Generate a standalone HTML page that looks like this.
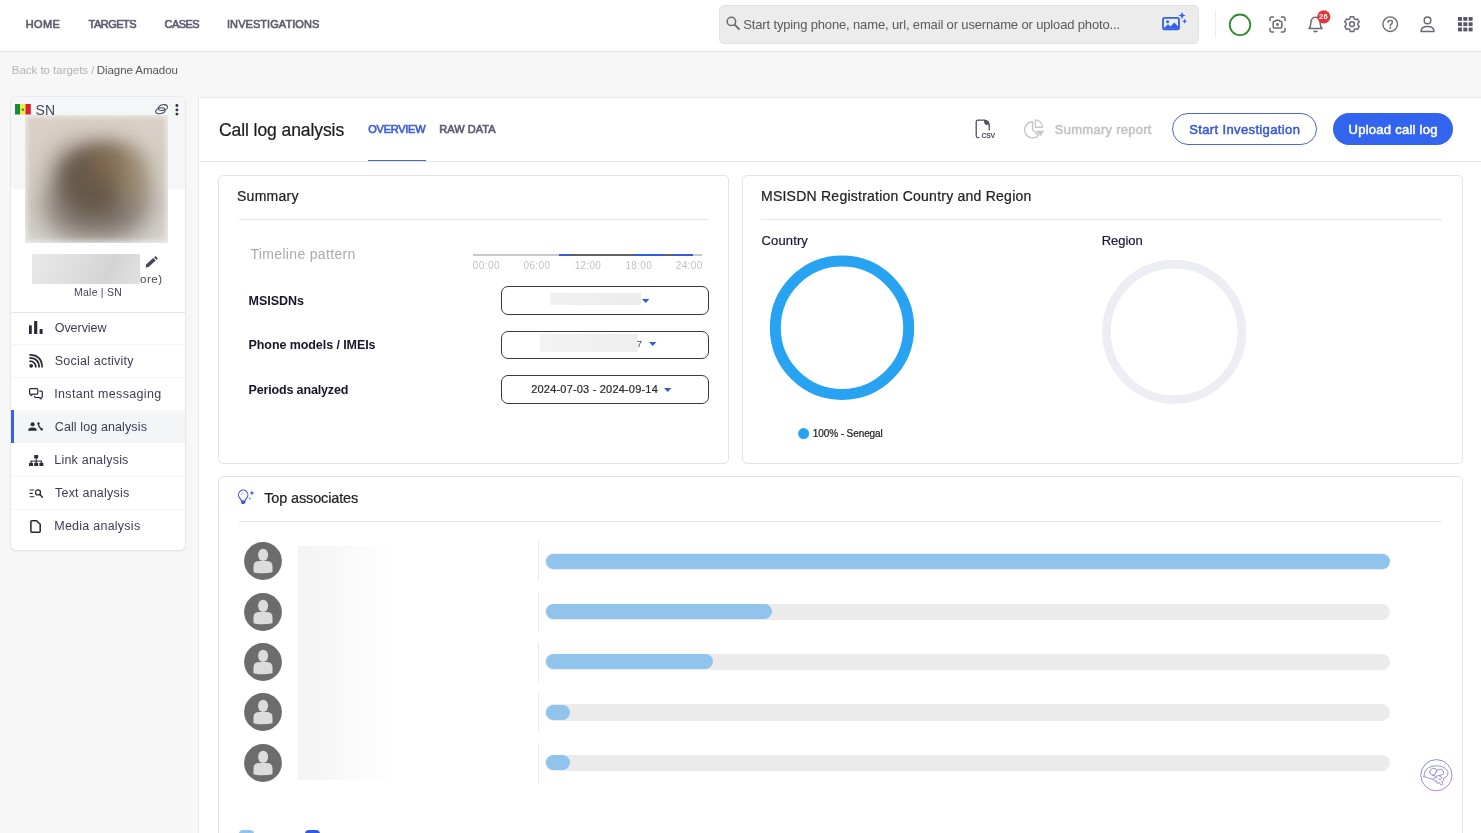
<!DOCTYPE html>
<html lang="en"><head><meta charset="utf-8"><title>Call log analysis</title>
<style>
*{box-sizing:border-box;margin:0;padding:0}
html,body{width:1481px;height:833px;overflow:hidden;background:#f7f7f7;font-family:"Liberation Sans",sans-serif}
.a{position:absolute}
.t{position:absolute;white-space:nowrap;line-height:1;font-family:"Liberation Sans",sans-serif}
#hdr{left:0;top:0;width:1481px;height:52px;background:#fff;border-bottom:1px solid #e2e2e2}
#search{left:719px;top:5px;width:480px;height:38.5px;background:#ececec;border:1px solid #e2e2e2;border-radius:5px}
#vdiv{left:1215px;top:10px;width:1px;height:28px;background:#ededed}
#side{left:10.7px;top:97.3px;width:174.5px;height:453px;background:#fff;border-radius:5px;overflow:hidden;box-shadow:0 0 0 1px rgba(0,0,0,.035),0 1px 3px rgba(0,0,0,.07)}
#sidetop{left:0;top:0;width:175px;height:92px;background:#f4f6f8}
#panel{left:198.3px;top:97px;width:1300px;height:760px;background:#fff;border:1px solid #e9e9e9}
.card{position:absolute;background:#fff;border:1px solid #e4e4e4;border-radius:5px}
.hr{position:absolute;height:1px;background:#e6e6e6}
.sel{position:absolute;left:501px;width:208px;border:1px solid #3a3a3a;border-radius:7px;background:#fff}
.track{position:absolute;left:545px;width:845.3px;height:16.8px;border-radius:8.4px;background:#ebebeb}
.fill{position:absolute;left:545.5px;height:15.2px;border-radius:7.6px;background:#90c4ec}
.vseg{position:absolute;left:538px;width:1px;height:40px;background:#e9e9e9}
.av{position:absolute;left:244px;width:38px;height:38px}
.mrow{position:absolute;left:10.7px;width:174.5px;height:1px;background:#f5f5f5}
svg{position:absolute;overflow:visible}
#texts{will-change:transform}

</style></head><body>
<div id="hdr" class="a"></div>
<div id="search" class="a"></div>
<div id="vdiv" class="a"></div>
<!-- header icons -->
<svg id="ic-search" style="left:726px;top:16px" width="14" height="14" viewBox="0 0 14 14"><circle cx="5.4" cy="5.4" r="4.2" fill="none" stroke="#6a6a72" stroke-width="1.5"/><path d="M8.6 8.6 L13 13" stroke="#6a6a72" stroke-width="1.8" stroke-linecap="round"/></svg>
<svg id="ic-img" style="left:1161.5px;top:12px" width="26" height="19" viewBox="0 0 26 19"><rect x="1" y="5.8" width="16" height="11.6" rx="1.6" fill="none" stroke="#2f62e6" stroke-width="1.8"/><circle cx="5.6" cy="9.8" r="1.5" fill="#2f62e6"/><path d="M1.5 16.5 L6 12.2 L8.6 14.4 L12.3 10.6 L16.5 15 V16.8 H1.5Z" fill="#2f62e6"/><path d="M20 0 L21 2.6 L23.6 3.6 L21 4.6 L20 7.2 L19 4.6 L16.4 3.6 L19 2.6Z" fill="#2f62e6"/><path d="M22.6 6.6 L23.3 8.5 L25.2 9.2 L23.3 9.9 L22.6 11.8 L21.9 9.9 L20 9.2 L21.9 8.5Z" fill="#2f62e6"/></svg>
<svg id="ic-green" style="left:1228px;top:13px" width="24" height="24" viewBox="0 0 24 24"><circle cx="12" cy="11.8" r="10.3" fill="none" stroke="#2e8b32" stroke-width="1.8"/></svg>
<svg id="ic-scan" style="left:1269px;top:15.5px" width="17" height="17" viewBox="0 0 17 17" fill="none" stroke="#696976" stroke-width="1.5" stroke-linecap="round" stroke-linejoin="round"><path d="M1 4.6V2.4Q1 1 2.4 1H4.6M12.4 1H14.6Q16 1 16 2.4V4.6M16 12.4V14.6Q16 16 14.6 16H12.4M4.6 16H2.4Q1 16 1 14.6V12.4"/><path d="M4.2 6.2Q4.2 5.2 5.2 5.2H6.2L7 4.2H10L10.8 5.2H11.8Q12.8 5.2 12.8 6.2V11Q12.8 12 11.8 12H5.2Q4.2 12 4.2 11Z"/><circle cx="8.5" cy="8.5" r="1.4" fill="#696976" stroke="none"/></svg>
<svg id="ic-bell" style="left:1307.5px;top:16px" width="15" height="17" viewBox="0 0 15 17" fill="none" stroke="#696976" stroke-width="1.5" stroke-linejoin="round" stroke-linecap="round"><path d="M1 12.4H14C12.6 11 12.2 9.6 12.2 7.2C12.2 3.6 10.4 1.2 7.5 1.2C4.6 1.2 2.8 3.6 2.8 7.2C2.8 9.6 2.4 11 1 12.4Z"/><path d="M6 15.2Q7.5 16.2 9 15.2"/></svg>
<svg id="ic-badge" style="left:1316.5px;top:9.6px" width="14" height="14" viewBox="0 0 14 14"><circle cx="6.8" cy="6.8" r="6.6" fill="#e5343a"/></svg>
<svg id="ic-gear" style="left:1344.4px;top:15.8px" width="16" height="16.4" viewBox="0 0 16 16.2" fill="none" stroke="#696976" stroke-width="1.45" stroke-linejoin="round"><path d="M5.71 2.88 L6.28 0.70 L9.72 0.70 L10.29 2.88 L11.37 3.51 L13.55 2.91 L15.27 5.89 L13.67 7.47 L13.67 8.73 L15.27 10.31 L13.55 13.29 L11.37 12.69 L10.29 13.32 L9.72 15.50 L6.28 15.50 L5.71 13.32 L4.63 12.69 L2.45 13.29 L0.73 10.31 L2.33 8.73 L2.33 7.47 L0.73 5.89 L2.45 2.91 L4.63 3.51Z"/><circle cx="8" cy="8.1" r="2.4"/></svg>
<svg id="ic-help" style="left:1381.6px;top:15.7px" width="16.4" height="16.4" viewBox="0 0 16.4 16.4" fill="none" stroke="#696976" stroke-width="1.4"><circle cx="8.2" cy="8.2" r="7.3"/><path d="M6 6.6Q6 4.4 8.2 4.4Q10.4 4.4 10.4 6.3Q10.4 7.4 9.2 8.1Q8.2 8.7 8.2 9.8" stroke-linecap="round"/><circle cx="8.2" cy="12" r=".95" fill="#696976" stroke="none"/></svg>
<svg id="ic-user" style="left:1420px;top:16px" width="15" height="16.4" viewBox="0 0 15 16.4" fill="none" stroke="#696976" stroke-width="1.5" stroke-linejoin="round"><circle cx="7.5" cy="4.4" r="3.3"/><path d="M1 15.4Q1 10.4 7.5 10.4Q14 10.4 14 15.4Z"/></svg>
<svg id="ic-grid" style="left:1457.8px;top:16.8px" width="14.6" height="14.6" viewBox="0 0 14.6 14.6" fill="#565668"><rect x="0" y="0" width="4" height="3.8"/><rect x="5.3" y="0" width="4" height="3.8"/><rect x="10.6" y="0" width="4" height="3.8"/><rect x="0" y="5.3" width="4" height="3.8"/><rect x="5.3" y="5.3" width="4" height="3.8"/><rect x="10.6" y="5.3" width="4" height="3.8"/><rect x="0" y="10.6" width="4" height="3.8"/><rect x="5.3" y="10.6" width="4" height="3.8"/><rect x="10.6" y="10.6" width="4" height="3.8"/></svg>

<!-- sidebar -->
<div id="side" class="a"><div id="sidetop" class="a"></div></div>
<svg id="flag" style="left:15.1px;top:104.1px" width="15.8" height="10.5" viewBox="0 0 15.8 10.5"><rect width="5.3" height="10.5" fill="#178a3c"/><rect x="5.2" width="5.4" height="10.5" fill="#f5eb3c"/><rect x="10.5" width="5.3" height="10.5" fill="#e01f2e"/><path d="M7.9 3.5 L8.4 4.9 L9.9 4.9 L8.7 5.8 L9.15 7.2 L7.9 6.35 L6.65 7.2 L7.1 5.8 L5.9 4.9 L7.4 4.9Z" fill="#178a3c"/></svg>
<svg id="ic-link" style="left:154.6px;top:104.2px" width="13" height="10.4" viewBox="0 0 13 10.4" fill="none" stroke="#44465a" stroke-width="1.05"><ellipse cx="7.9" cy="3.6" rx="4.7" ry="2.8" transform="rotate(-12 7.9 3.6)"/><ellipse cx="5.3" cy="6.8" rx="4.8" ry="2.8" transform="rotate(-12 5.3 6.8)"/></svg>
<svg id="ic-dots" style="left:174.6px;top:103.6px" width="4" height="13" viewBox="0 0 4 13" fill="#33343f"><circle cx="1.9" cy="1.5" r="1.45"/><circle cx="1.9" cy="5.9" r="1.45"/><circle cx="1.9" cy="10.1" r="1.45"/></svg>
<div id="photo" class="a" style="left:24.8px;top:115.2px;width:143px;height:127.6px;overflow:hidden;background:linear-gradient(180deg,#d9d1c7 0%,#d6cec4 35%,#d2ccc5 70%,#d9d6d2 100%)">
<div class="a" style="left:30px;top:32px;width:84px;height:84px;border-radius:30px;background:#6b5c4e;filter:blur(13px)"></div>
<div class="a" style="left:18px;top:72px;width:104px;height:50px;border-radius:26px;background:#857f79;filter:blur(14px);opacity:.7"></div>
<div class="a" style="left:40px;top:36px;width:58px;height:64px;border-radius:26px;background:#675949;filter:blur(10px)"></div>
<div class="a" style="left:66px;top:30px;width:38px;height:34px;border-radius:18px;background:#8f7153;filter:blur(10px);opacity:.65"></div>
<div class="a" style="left:92px;top:36px;width:30px;height:56px;border-radius:15px;background:#a39173;filter:blur(10px);opacity:.65"></div>
<div class="a" style="left:0;top:0;width:143px;height:127.6px;box-shadow:inset 0 0 5px 2px rgba(255,255,255,.55)"></div>
</div>
<div id="redname" class="a" style="left:32px;top:253.6px;width:107.8px;height:30.8px;background:linear-gradient(115deg,#e9e9e9 0%,#dedede 40%,#d4d4d4 70%,#e2e2e2 100%)"></div>
<svg id="ic-pencil" style="left:144.8px;top:256px" width="13" height="12" viewBox="0 0 13 12" fill="#44465a"><path d="M.6 11.4 L1.1 8.4 L8.2 1.9 L10.7 4.5 L3.6 11 Z"/><path d="M9 1.2 L9.9 .4 Q10.5 0 11.1 .5 L12.4 1.9 Q12.9 2.5 12.4 3.1 L11.5 3.9 Z"/></svg>
<div class="mrow" style="top:311.5px;background:#e6e6e6"></div>
<div class="mrow" style="top:344px"></div>
<div class="mrow" style="top:377px"></div>
<div class="a" style="left:10.7px;top:410.3px;width:174.5px;height:32.7px;background:#f4f5f7"></div>
<div class="a" style="left:10.7px;top:410.3px;width:3.2px;height:32.7px;background:#3b60e0"></div>
<div class="mrow" style="top:476px"></div>
<div class="mrow" style="top:509px"></div>
<!-- sidebar icons -->
<svg id="mi1" style="left:29.2px;top:321.4px" width="13.6" height="13" viewBox="0 0 13.6 13" fill="#2a2b36"><rect x="0" y="4.3" width="2.8" height="8.7" rx=".5"/><rect x="5.1" y="0" width="3.2" height="13" rx=".5"/><rect x="10.6" y="7.9" width="3" height="5.1" rx=".5"/></svg>
<svg id="mi2" style="left:29px;top:354px" width="14" height="14" viewBox="0 0 14 14" fill="none" stroke="#2a2b36" stroke-width="1.7"><circle cx="2.2" cy="11.8" r="1.9" fill="#2a2b36" stroke="none"/><path d="M.4 7.2 Q6.8 7.2 6.8 13.6"/><path d="M.4 3.9 Q10.1 3.9 10.1 13.6"/><path d="M.4 .9 Q13.1 .9 13.1 13.6"/></svg>
<svg id="mi3" style="left:29px;top:387.6px" width="14" height="12" viewBox="0 0 14 12" fill="none" stroke="#2a2b36" stroke-width="1.2" stroke-linejoin="round"><path d="M1.4 .7H7.8Q8.8 .7 8.8 1.7V5.2Q8.8 6.2 7.8 6.2H3.6L2 7.6V6.2H1.4Q.6 6.2 .6 5.4V1.5Q.6 .7 1.4 .7Z"/><path d="M10.4 3.2H12.4Q13.3 3.2 13.3 4.1V8.6Q13.3 9.5 12.4 9.5H12V11L10.2 9.5H6.6Q5.6 9.5 5.6 8.6V7.8"/></svg>
<svg id="mi4" style="left:27.8px;top:422.2px" width="15.4" height="9" viewBox="0 0 15.4 9" fill="#2a2b36"><circle cx="4.6" cy="2.2" r="2.05"/><path d="M.1 8.8Q.1 5.6 4.6 5.6Q8.8 5.6 8.8 8.8Z"/><path d="M10.2 1Q10.2 4.6 13.6 7.4" fill="none" stroke="#2a2b36" stroke-width="1.2" stroke-linecap="round"/><circle cx="10.6" cy="1.5" r="1.15"/><ellipse cx="13.7" cy="7.4" rx="1.35" ry="1.05"/></svg>
<svg id="mi5" style="left:28.8px;top:454.8px" width="14.4" height="11" viewBox="0 0 14.4 11" fill="#2a2b36"><rect x="5.2" y="0" width="4" height="3.4" rx=".6"/><rect x="6.7" y="3" width="1" height="3.4"/><rect x="1.6" y="5.6" width="11.2" height="1"/><rect x="1.6" y="5.6" width="1" height="2.6"/><rect x="11.8" y="5.6" width="1" height="2.6"/><rect x="6.7" y="5.6" width="1" height="2.6"/><rect x="0" y="7.8" width="4" height="3.2" rx=".6"/><rect x="5.2" y="7.8" width="4" height="3.2" rx=".6"/><rect x="10.4" y="7.8" width="4" height="3.2" rx=".6"/></svg>
<svg id="mi6" style="left:28.8px;top:488.8px" width="14" height="9" viewBox="0 0 14 9" fill="none" stroke="#2a2b36" stroke-width="1.1"><path d="M.6 1H5M.6 4.4H3.8M.6 7.8H5.4"/><circle cx="9" cy="3.4" r="2.5" stroke-width="1.3"/><path d="M10.9 5.4L13.4 8.2" stroke-width="1.5" stroke-linecap="round"/></svg>
<svg id="mi7" style="left:30.4px;top:519.6px" width="11" height="13" viewBox="0 0 11 13" fill="none" stroke="#22232c" stroke-width="1.5" stroke-linejoin="round"><path d="M1.9 .8H6.6L10.2 4.2V11.2Q10.2 12.2 9.2 12.2H1.9Q.9 12.2 .9 11.2V1.8Q.9 .8 1.9 .8Z"/></svg>

<!-- main panel -->
<div id="panel" class="a"></div>
<div class="hr" style="left:199.5px;top:160.5px;width:1290px;background:#e4e4e4"></div>
<div class="a" style="left:368.2px;top:159.5px;width:57.8px;height:1.5px;background:#4565d8"></div>
<!-- top right actions -->
<svg id="ic-csv" style="left:975.2px;top:118.6px" width="16" height="20" viewBox="0 0 16 20" fill="none" stroke="#4a4b5c" stroke-width="1.25" stroke-linejoin="round" stroke-linecap="round"><path d="M14.2 11V6.6Q14.2 1.2 9 1.2H3Q1.2 1.2 1.2 3V16.8Q1.2 18.6 3 18.6H3.8"/><path d="M9.6 1.6V3.6Q9.6 5.4 11.4 5.4H13.6Q12.6 2.4 9.6 1.6Z" fill="#4a4b5c" stroke-width=".8"/></svg>
<svg id="ic-pie" style="left:1023.6px;top:118.6px" width="21" height="19" viewBox="0 0 21 19" fill="none" stroke="#c6c6ca" stroke-width="1.4" stroke-linejoin="round"><path d="M8.6 2.8A8 8 0 1 0 14.4 16.4L8.6 10.8Z"/><path d="M11.4 .9V8.2H18.4A7.3 7.3 0 0 0 11.4 .9Z"/><path d="M12.4 12H19.6L16.6 16.6Z" fill="#c6c6ca" stroke-width=".8"/></svg>
<div class="a" style="left:1172px;top:113px;width:145px;height:32px;border:1px solid #4b68d8;border-radius:16px;background:#fff"></div>
<div class="a" style="left:1333px;top:113px;width:120px;height:32px;border-radius:16px;background:#3264ee"></div>

<!-- Summary card -->
<div class="card" style="left:217.5px;top:174.5px;width:511px;height:289px"></div>
<div class="hr" style="left:239px;top:219px;width:470px"></div>
<!-- timeline -->
<div class="a" style="left:473.2px;top:254px;width:228.8px;height:2px;background:#c9c9c9"></div>
<div class="a" style="left:558.8px;top:254px;width:133.8px;height:2px;background:#616161"></div>
<div class="a" style="left:558.8px;top:254px;width:10.9px;height:2px;background:#2f5ce2"></div>
<div class="a" style="left:633.8px;top:254px;width:30.7px;height:2px;background:#2f5ce2"></div>
<div class="a" style="left:673.3px;top:254px;width:19.3px;height:2px;background:#2f5ce2"></div>
<div class="sel" style="top:286px;height:29px"></div>
<div class="sel" style="top:331px;height:28px"></div>
<div class="sel" style="top:375.3px;height:28.7px"></div>
<div class="a" style="left:549.6px;top:292.5px;width:91px;height:12.4px;background:linear-gradient(90deg,#f1f1f1,#ececec)"></div>
<div class="a" style="left:539.8px;top:333.6px;width:98px;height:18.2px;background:linear-gradient(90deg,#f3f3f3,#eeeeee)"></div>
<svg style="left:642.2px;top:298.6px" width="7.4" height="4" viewBox="0 0 7.4 4"><path d="M0 0H7.4L3.7 4Z" fill="#2f5ce2"/></svg>
<svg style="left:648.9px;top:342.4px" width="7.4" height="4" viewBox="0 0 7.4 4"><path d="M0 0H7.4L3.7 4Z" fill="#2f5ce2"/></svg>
<svg style="left:664.2px;top:387.6px" width="7.4" height="4" viewBox="0 0 7.4 4"><path d="M0 0H7.4L3.7 4Z" fill="#2f5ce2"/></svg>

<!-- MSISDN card -->
<div class="card" style="left:742px;top:174.5px;width:721px;height:289px"></div>
<div class="hr" style="left:761px;top:219px;width:681px"></div>
<svg style="left:768px;top:254px" width="148" height="148" viewBox="0 0 148 148"><circle cx="74" cy="73.8" r="66.7" fill="none" stroke="#27a3f1" stroke-width="11"/></svg>
<svg style="left:1100px;top:258px" width="148" height="148" viewBox="0 0 148 148"><circle cx="74.2" cy="73.8" r="67.7" fill="none" stroke="#eceef4" stroke-width="8.6"/></svg>
<svg style="left:798px;top:427.8px" width="11.2" height="11.2" viewBox="0 0 11.2 11.2"><circle cx="5.6" cy="5.6" r="5.5" fill="#27a3f1"/></svg>

<!-- Top associates card -->
<div class="card" style="left:217.5px;top:476px;width:1245.5px;height:400px"></div>
<div class="hr" style="left:239px;top:521px;width:1203px"></div>
<svg id="ic-bulb" style="left:238px;top:490.2px" width="17" height="14.4" viewBox="0 0 17 14.4" fill="none" stroke="#4759d0" stroke-width="1.1" stroke-linecap="round" stroke-linejoin="round"><path d="M3.3 11Q3.1 9.4 1.7 8A4.7 4.7 0 1 1 8.7 8Q7.3 9.4 7.1 11Z"/><path d="M3.5 11.3H6.9V12.3Q6.9 13.5 5.2 13.5Q3.5 13.5 3.5 12.3Z" fill="#4759d0"/><path d="M3 4.6Q3.5 3.2 5 2.9" stroke-width=".7" opacity=".7"/><path d="M13.9 .5L14.6 2.3L16.4 3L14.6 3.7L13.9 5.5L13.2 3.7L11.4 3L13.2 2.3Z" fill="#4759d0" stroke="none"/><path d="M11.9 7.1L12.3 8L13.2 8.4L12.3 8.8L11.9 9.7L11.5 8.8L10.6 8.4L11.5 8Z" fill="#4759d0" stroke="none"/></svg>
<div class="a" style="left:298px;top:546px;width:98px;height:234px;background:linear-gradient(90deg,#f3f3f3 0%,#f7f7f7 30%,#fbfbfb 65%,#ffffff 100%)"></div>
<div class="vseg" style="top:541.3px"></div>
<div class="track" style="top:552.9px"></div>
<div class="fill" style="top:553.7px;width:844.5px"></div>
<svg class="av" style="left:243.9px;top:542.1px" width="38.4" height="38.4" viewBox="0 0 38.4 38.4"><circle cx="19.2" cy="19.2" r="19.1" fill="#6c6c6c"/><ellipse cx="19.3" cy="13" rx="5.1" ry="6.1" fill="#dcdcdc"/><path d="M9.6 30.6V24.6Q9.6 19.4 15 19.2H23.6Q28.8 19.4 28.8 24.6V30.6Q19.2 32.8 9.6 30.6Z" fill="#dcdcdc"/></svg>
<div class="vseg" style="top:591.9px"></div>
<div class="track" style="top:603.5px"></div>
<div class="fill" style="top:604.3px;width:226.5px"></div>
<svg class="av" style="left:243.9px;top:592.7px" width="38.4" height="38.4" viewBox="0 0 38.4 38.4"><circle cx="19.2" cy="19.2" r="19.1" fill="#6c6c6c"/><ellipse cx="19.3" cy="13" rx="5.1" ry="6.1" fill="#dcdcdc"/><path d="M9.6 30.6V24.6Q9.6 19.4 15 19.2H23.6Q28.8 19.4 28.8 24.6V30.6Q19.2 32.8 9.6 30.6Z" fill="#dcdcdc"/></svg>
<div class="vseg" style="top:641.9px"></div>
<div class="track" style="top:653.5px"></div>
<div class="fill" style="top:654.3px;width:167.8px"></div>
<svg class="av" style="left:243.9px;top:642.7px" width="38.4" height="38.4" viewBox="0 0 38.4 38.4"><circle cx="19.2" cy="19.2" r="19.1" fill="#6c6c6c"/><ellipse cx="19.3" cy="13" rx="5.1" ry="6.1" fill="#dcdcdc"/><path d="M9.6 30.6V24.6Q9.6 19.4 15 19.2H23.6Q28.8 19.4 28.8 24.6V30.6Q19.2 32.8 9.6 30.6Z" fill="#dcdcdc"/></svg>
<div class="vseg" style="top:692.2px"></div>
<div class="track" style="top:703.8px"></div>
<div class="fill" style="top:704.6px;width:24.5px"></div>
<svg class="av" style="left:243.9px;top:693.0px" width="38.4" height="38.4" viewBox="0 0 38.4 38.4"><circle cx="19.2" cy="19.2" r="19.1" fill="#6c6c6c"/><ellipse cx="19.3" cy="13" rx="5.1" ry="6.1" fill="#dcdcdc"/><path d="M9.6 30.6V24.6Q9.6 19.4 15 19.2H23.6Q28.8 19.4 28.8 24.6V30.6Q19.2 32.8 9.6 30.6Z" fill="#dcdcdc"/></svg>
<div class="vseg" style="top:742.9px"></div>
<div class="track" style="top:754.5px"></div>
<div class="fill" style="top:755.3px;width:24.5px"></div>
<svg class="av" style="left:243.9px;top:743.7px" width="38.4" height="38.4" viewBox="0 0 38.4 38.4"><circle cx="19.2" cy="19.2" r="19.1" fill="#6c6c6c"/><ellipse cx="19.3" cy="13" rx="5.1" ry="6.1" fill="#dcdcdc"/><path d="M9.6 30.6V24.6Q9.6 19.4 15 19.2H23.6Q28.8 19.4 28.8 24.6V30.6Q19.2 32.8 9.6 30.6Z" fill="#dcdcdc"/></svg>
<div class="a" style="left:238.5px;top:830px;width:15px;height:12px;border-radius:4px;background:#90c4ec"></div>
<div class="a" style="left:304.5px;top:830px;width:15.6px;height:12px;border-radius:4px;background:#2f5ce2"></div>
<svg id="ic-brain" style="left:1420.4px;top:759.2px" width="33" height="33" viewBox="0 0 33 33" fill="none"><defs><linearGradient id="bg" x1="0" y1="0" x2="1" y2="1"><stop offset="0" stop-color="#6f8fe6"/><stop offset="1" stop-color="#c77fd6"/></linearGradient></defs><circle cx="16.4" cy="16.2" r="15.6" fill="#fff" stroke="url(#bg)" stroke-width="1"/><g stroke="#7c78d2" stroke-width=".8" stroke-linecap="round" stroke-linejoin="round"><path d="M4 17.6Q3.6 9.4 12 7.4Q20 5.6 25.6 9.6Q29.4 12.6 27.6 16.4Q26.6 18.2 24 18.6L23.4 21.6Q23 23 22 22.6L22.4 25.6Q21.4 26.4 20.4 25.4L19.2 23.6Q18 24.8 16.4 23.6L16.8 22Q14 22.8 13.4 20.4Q9 19.6 4 17.6Z"/><path d="M9.6 13Q10 9.4 14 9.2Q17 9.2 16.6 12.4Q16.2 15.6 12.6 16.2Q9.8 16 9.6 13Z"/><path d="M15.6 13Q17.4 9.4 21 10.4Q24.6 11.6 23.6 14.6Q22.6 16.4 19.6 16.2"/><path d="M12.6 16.2Q15 18.4 19.2 16.6Q21.6 17.2 21.6 19.4Q21.2 21 18.8 20.6"/><path d="M13.4 20.4Q14.4 17.6 16.6 18.6"/></g></svg>

<div id="texts">
<span id="nav1" class="t" style="left:25.75px;top:18.69px;font-size:11px;font-weight:400;color:#5c5d74;letter-spacing:0.400px;-webkit-text-stroke:.65px #5c5d74">HOME</span>
<span id="nav2" class="t" style="left:88.50px;top:18.69px;font-size:11px;font-weight:400;color:#5c5d74;letter-spacing:-0.500px;-webkit-text-stroke:.65px #5c5d74">TARGETS</span>
<span id="nav3" class="t" style="left:164.50px;top:18.69px;font-size:11px;font-weight:400;color:#5c5d74;letter-spacing:-0.562px;-webkit-text-stroke:.65px #5c5d74">CASES</span>
<span id="nav4" class="t" style="left:227.00px;top:18.69px;font-size:11px;font-weight:400;color:#5c5d74;letter-spacing:0.065px;-webkit-text-stroke:.65px #5c5d74">INVESTIGATIONS</span>
<span id="srch" class="t" style="left:743.25px;top:18.00px;font-size:13px;font-weight:400;color:#5a5a5a;letter-spacing:-0.148px">Start typing phone, name, url, email or username or upload photo...</span>
<span id="bc1" class="t" style="left:11.75px;top:64.67px;font-size:11.5px;font-weight:400;color:#b4b4b4;letter-spacing:-0.025px">Back to targets /</span>
<span id="bc2" class="t" style="left:96.75px;top:64.67px;font-size:11.5px;font-weight:400;color:#555;letter-spacing:-0.058px">Diagne Amadou</span>
<span id="sn" class="t" style="left:35.50px;top:103.15px;font-size:14px;font-weight:400;color:#44465a;letter-spacing:0.050px">SN</span>
<span id="more" class="t" style="left:140.00px;top:274.27px;font-size:11.5px;font-weight:400;color:#44465a;letter-spacing:0.517px">ore)</span>
<span id="male" class="t" style="left:74.00px;top:287.11px;font-size:10.5px;font-weight:400;color:#44465a;letter-spacing:0.238px">Male | SN</span>
<span id="m1" class="t" style="left:54.75px;top:322.42px;font-size:12.5px;font-weight:400;color:#3a3d55;letter-spacing:-0.050px">Overview</span>
<span id="m2" class="t" style="left:54.75px;top:355.42px;font-size:12.5px;font-weight:400;color:#3a3d55;letter-spacing:0.218px">Social activity</span>
<span id="m3" class="t" style="left:54.25px;top:388.42px;font-size:12.5px;font-weight:400;color:#3a3d55;letter-spacing:0.344px">Instant messaging</span>
<span id="m4" class="t" style="left:54.75px;top:421.42px;font-size:12.5px;font-weight:400;color:#3a3d55;letter-spacing:0.113px">Call log analysis</span>
<span id="m5" class="t" style="left:54.25px;top:454.42px;font-size:12.5px;font-weight:400;color:#3a3d55;letter-spacing:0.213px">Link analysis</span>
<span id="m6" class="t" style="left:55.00px;top:487.42px;font-size:12.5px;font-weight:400;color:#3a3d55;letter-spacing:0.217px">Text analysis</span>
<span id="m7" class="t" style="left:54.25px;top:520.42px;font-size:12.5px;font-weight:400;color:#3a3d55;letter-spacing:0.246px">Media analysis</span>
<span id="title" class="t" style="left:219.00px;top:122.19px;font-size:17.5px;font-weight:400;color:#1c1c1c;letter-spacing:-0.081px;-webkit-text-stroke:.22px #1c1c1c">Call log analysis</span>
<span id="tab1" class="t" style="left:368.25px;top:123.89px;font-size:11px;font-weight:400;color:#3d5fd6;letter-spacing:-0.250px;-webkit-text-stroke:.65px #3d5fd6">OVERVIEW</span>
<span id="tab2" class="t" style="left:439.25px;top:123.89px;font-size:11px;font-weight:400;color:#5c5d74;letter-spacing:0.043px;-webkit-text-stroke:.65px #5c5d74">RAW DATA</span>
<span id="sumrep" class="t" style="left:1054.75px;top:123.00px;font-size:13px;font-weight:400;color:#c2c2c6;letter-spacing:0.269px;-webkit-text-stroke:.5px #c2c2c6">Summary report</span>
<span id="btn1" class="t" style="left:1189.25px;top:123.20px;font-size:13px;font-weight:400;color:#3558d4;letter-spacing:0.364px;-webkit-text-stroke:.5px #3558d4">Start Investigation</span>
<span id="btn2" class="t" style="left:1348.50px;top:123.20px;font-size:13px;font-weight:400;color:#ffffff;letter-spacing:0.261px;-webkit-text-stroke:.5px #ffffff">Upload call log</span>
<span id="h1" class="t" style="left:237.00px;top:188.75px;font-size:14px;font-weight:400;color:#222;letter-spacing:0.275px;-webkit-text-stroke:.22px #222">Summary</span>
<span id="h2" class="t" style="left:761.00px;top:189.05px;font-size:14px;font-weight:400;color:#222;letter-spacing:0.239px;-webkit-text-stroke:.22px #222">MSISDN Registration Country and Region</span>
<span id="tl" class="t" style="left:250.50px;top:246.95px;font-size:14px;font-weight:400;color:#ababab;letter-spacing:0.327px">Timeline pattern</span>
<span id="t0" class="t" style="left:472.75px;top:261.14px;font-size:10px;font-weight:400;color:#c2c2c2;letter-spacing:0.425px">00:00</span>
<span id="t1" class="t" style="left:523.50px;top:261.14px;font-size:10px;font-weight:400;color:#c2c2c2;letter-spacing:0.375px">06:00</span>
<span id="t2" class="t" style="left:574.75px;top:261.14px;font-size:10px;font-weight:400;color:#c2c2c2;letter-spacing:0.275px">12:00</span>
<span id="t3" class="t" style="left:625.50px;top:261.14px;font-size:10px;font-weight:400;color:#c2c2c2;letter-spacing:0.312px">18:00</span>
<span id="t4" class="t" style="left:675.75px;top:261.14px;font-size:10px;font-weight:400;color:#c2c2c2;letter-spacing:0.388px">24:00</span>
<span id="r1" class="t" style="left:248.50px;top:295.42px;font-size:12.5px;font-weight:700;color:#15152e;letter-spacing:-0.017px">MSISDNs</span>
<span id="r2" class="t" style="left:248.50px;top:339.42px;font-size:12.5px;font-weight:700;color:#15152e;letter-spacing:-0.076px">Phone models / IMEIs</span>
<span id="r3" class="t" style="left:248.50px;top:384.42px;font-size:12.5px;font-weight:700;color:#15152e;letter-spacing:-0.150px">Periods analyzed</span>
<span id="seven" class="t" style="left:636.75px;top:339.16px;font-size:9.5px;font-weight:400;color:#444;letter-spacing:0.000px">7</span>
<span id="per" class="t" style="left:531.25px;top:383.69px;font-size:11px;font-weight:400;color:#2a2a2a;letter-spacing:0.191px;-webkit-text-stroke:.22px #2a2a2a">2024-07-03 - 2024-09-14</span>
<span id="cty" class="t" style="left:761.50px;top:234.40px;font-size:13px;font-weight:400;color:#1a1a3a;letter-spacing:0.142px;-webkit-text-stroke:.22px #1a1a3a">Country</span>
<span id="reg" class="t" style="left:1101.75px;top:233.70px;font-size:13px;font-weight:400;color:#1a1a3a;letter-spacing:-0.030px;-webkit-text-stroke:.22px #1a1a3a">Region</span>
<span id="leg" class="t" style="left:812.75px;top:428.54px;font-size:10px;font-weight:400;color:#222;letter-spacing:-0.088px;-webkit-text-stroke:.22px #222">100% - Senegal</span>
<span id="topa" class="t" style="left:264.25px;top:490.73px;font-size:14.5px;font-weight:400;color:#222;letter-spacing:-0.146px;-webkit-text-stroke:.22px #222">Top associates</span>
<span id="csv" class="t" style="left:981.50px;top:131.67px;font-size:7px;font-weight:700;color:#4a4b5c;letter-spacing:-0.350px">CSV</span>
<span id="badge" class="t" style="left:1319.00px;top:12.65px;font-size:7.5px;font-weight:700;color:#fff;letter-spacing:0.300px">26</span>
</div>
</body></html>
